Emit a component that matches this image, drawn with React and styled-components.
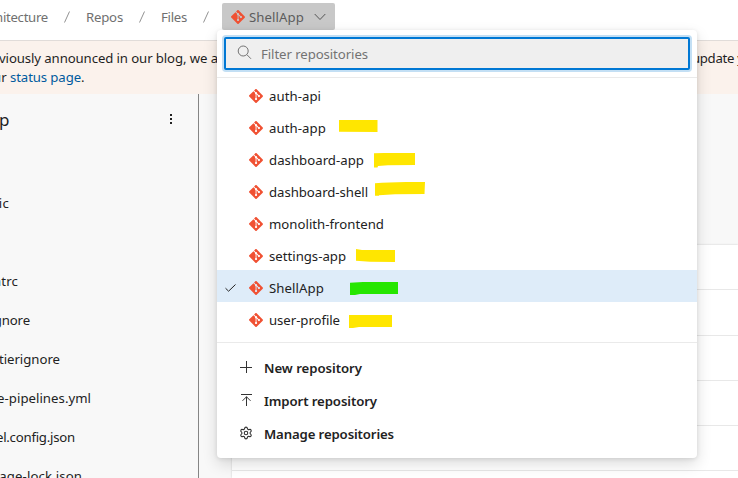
import React, { useLayoutEffect, useRef } from "react";
import styled, { createGlobalStyle } from "styled-components";
import { SiGit } from "react-icons/si";
import { Settings } from "lucide-react";

const GlobalStyle = createGlobalStyle`
  * { box-sizing: border-box; }
  body { margin: 0; background: #fff; overflow: hidden; }
`;

const Page = styled.div`
  position: relative;
  width: 738px;
  height: 478px;
  overflow: hidden;
  display: flex;
  flex-direction: column;
  background: #fff;
  color: #222;
  font-family: "Noto Sans", "Open Sans", sans-serif;
  font-size: 13.2px;
  line-height: 20px;
`;

const Measured = styled.span`
  display: block;
  flex: none;
  width: ${(p) => p.$width}px;
  white-space: pre;
`;

/* Tracks its label so that it spans exactly the given width. */
function Label({ width, children, className }) {
  const ref = useRef(null);
  useLayoutEffect(() => {
    const el = ref.current;
    el.style.letterSpacing = "0px";
    const natural = el.getBoundingClientRect().width;
    el.style.letterSpacing = `${(width - natural) / children.length}px`;
  }, [width, children]);
  return (
    <Measured $width={width} className={className}>
      <span ref={ref}>{children}</span>
    </Measured>
  );
}

const Header = styled.header`
  flex: none;
  display: flex;
  align-items: flex-start;
  height: 41px;
  border-bottom: 1px solid #e1dcd9;
  color: #707070;
`;

const Crumbs = styled.nav`
  display: flex;
  align-items: center;
  height: 33px;
  padding-top: 1px;
  margin-left: -11px;
`;

const Slash = styled.svg`
  flex: none;
  width: 6px;
  height: 12px;
  margin: 0 16px;
  stroke: #929292;
  fill: none;
`;

const RepoButton = styled.button`
  display: flex;
  align-items: center;
  width: 113px;
  height: 27px;
  margin: 3px 0 0 -3px;
  padding: 0 8px 0 9px;
  border: 0;
  border-radius: 2px;
  background: #c8c8c8;
  color: #5c5c5c;
  font: inherit;
  text-align: left;
`;

const GitIcon = styled(SiGit)`
  flex: none;
  width: 14px;
  height: 14px;
  color: #f05133;
  margin-right: ${(p) => p.$gap}px;
`;

const Chevron = styled.svg`
  flex: none;
  width: 12px;
  height: 8px;
  margin-left: 10px;
  fill: none;
  stroke: #555;
`;

const Banner = styled.div`
  flex: none;
  height: 53px;
  padding-top: 7px;
  background: #fbf2ec;
  color: #1f1f1f;
`;

const BannerLine = styled.div`
  display: flex;
  height: 19px;
  margin-left: ${(p) => p.$shift}px;
`;

const Hidden = styled.span`
  flex: none;
  width: 474px;
`;

const Link = styled.a`
  color: #005a9e;
`;

const Body = styled.div`
  flex: 1;
  display: flex;
  min-height: 0;
  background: #f8f8f8;
`;

const Sidebar = styled.aside`
  flex: none;
  width: 199px;
  border-right: 1px solid #858585;
`;

const SidebarHead = styled.div`
  display: flex;
  align-items: center;
  justify-content: space-between;
  height: 51px;
  padding-right: 25px;
`;

const RepoTitle = styled.h1`
  margin: 0 0 0 -1px;
  font-size: 17px;
  font-weight: 400;
  line-height: 24px;
`;

const Kebab = styled.svg`
  width: 4px;
  height: 12px;
  margin-top: -1px;
  fill: #222;
`;

const FileRow = styled.div`
  display: flex;
  align-items: center;
  height: 39px;
  padding-bottom: 1px;
  margin-left: ${(p) => p.$shift}px;
`;

const FileArea = styled.main`
  flex: 1;
  padding: 151px 0 0 33px;
`;

const FileTable = styled.div`
  height: 100%;
  background: #fff;
  box-shadow: 0 0 2px rgba(0, 0, 0, 0.18);
`;

const TableRow = styled.div`
  height: ${(p) => p.$height}px;
  border-bottom: 1px solid #e8e8e8;
`;

const Popup = styled.section`
  position: absolute;
  left: 217px;
  top: 30px;
  width: 480px;
  height: 428px;
  border-radius: 4px;
  background: #fff;
  box-shadow: 0 6px 15px rgba(0, 0, 0, 0.14), 0 1px 4px rgba(0, 0, 0, 0.1);
`;

const SearchArea = styled.div`
  height: 48px;
  padding: 7px;
  border-bottom: 1px solid #eaeaea;
`;

const SearchBox = styled.div`
  display: flex;
  align-items: center;
  height: 33px;
  padding-left: 11px;
  border: 2px solid #0078d4;
  border-radius: 2px;
  background: #efefef;
  box-shadow: 0 0 0 2px #c3dff4;
  color: #737373;
`;

const SearchIcon = styled.svg`
  flex: none;
  width: 15px;
  height: 15px;
  margin: -3px 9px 0 0;
  fill: none;
  stroke: #737373;
`;

const RepoList = styled.ul`
  list-style: none;
  margin: 0;
  height: 265px;
  padding: 0;
  border-bottom: 1px solid #eaeaea;
`;

const RepoItem = styled.li`
  position: relative;
  display: flex;
  align-items: center;
  height: 32px;
  padding: 4px 0 0 8px;
  background: ${(p) => (p.$selected ? "#deecf9" : "transparent")};
`;

const CheckSlot = styled.span`
  display: flex;
  flex: none;
  width: 24px;
`;

const Check = styled.svg`
  width: 11px;
  height: 8px;
  fill: none;
  stroke: #222;
`;

const Marker = styled.svg`
  position: absolute;
  left: ${(p) => p.$left}px;
  top: ${(p) => p.$top}px;
  width: 52px;
  height: 16px;
  fill: ${(p) => p.$color};
`;

const Actions = styled.div`
  padding-top: 8px;
`;

const Action = styled.div`
  display: flex;
  align-items: center;
  gap: 11px;
  height: 33px;
  padding-left: 22px;
  font-weight: 600;
`;

const ActionIcon = styled.svg`
  flex: none;
  width: 14px;
  height: 14px;
  margin-top: -2px;
  fill: none;
  stroke: #333;
`;

const GearIcon = styled(Settings)`
  flex: none;
  width: 14px;
  height: 14px;
  margin-top: -2px;
  color: #333;
`;

const YELLOW = "#ffe600";
const GREEN = "#26e600";

const REPOS = [
  { name: "auth-api", width: 52 },
  { name: "auth-app", width: 57, mark: { left: 122, top: 10, color: YELLOW, d: "M0 0H38.5V12L0 11.7Z" } },
  { name: "dashboard-app", width: 95, mark: { left: 157, top: 11, color: YELLOW, d: "M0 .3L10 0H41V12L14 12.2L4 13L3.5 14.5H0Z" } },
  { name: "dashboard-shell", width: 99, mark: { left: 158, top: 8, color: YELLOW, d: "M0 1.2Q20-.3 50 0L49.5 12L20 12.3L4 13.3V13.8H0Z" } },
  { name: "monolith-frontend", width: 115 },
  { name: "settings-app", width: 77, mark: { left: 139, top: 11, color: YELLOW, d: "M0 0L6 1L39 1V13L14 12.7L0 11.7Z" } },
  { name: "ShellApp", width: 55, selected: true, mark: { left: 133, top: 12, color: GREEN, d: "M0 .8L13 0H48V12L10 12L5 13H0Z" } },
  { name: "user-profile", width: 71, mark: { left: 132, top: 13, color: YELLOW, d: "M0 0H43V12H10L4 13H0Z" } },
];

const FILES = [
  { name: "", width: 0, shift: 0 },
  { name: "public", width: 39, shift: -30 },
  { name: "", width: 0, shift: 0 },
  { name: ".eslintrc", width: 50, shift: -32 },
  { name: ".gitignore", width: 59, shift: -29 },
  { name: ".prettierignore", width: 90, shift: -30 },
  { name: "azure-pipelines.yml", width: 121, shift: -30 },
  { name: "babel.config.json", width: 102, shift: -27 },
  { name: "package-lock.json", width: 112, shift: -30 },
];

const ROW_HEIGHTS = [45, 46, 45, 45, 45];

function Separator() {
  return (
    <Slash viewBox="0 0 6 12">
      <path d="M5.5 .5L.5 11.5" />
    </Slash>
  );
}

export default function App() {
  return (
    <Page>
      <GlobalStyle />
      <Header>
        <Crumbs>
          <Label width={59}>chitecture</Label>
          <Separator />
          <Label width={37}>Repos</Label>
          <Separator />
          <Label width={26}>Files</Label>
          <Separator />
        </Crumbs>
        <RepoButton>
          <GitIcon $gap={4} />
          <Label width={55}>ShellApp</Label>
          <Chevron viewBox="0 0 12 8">
            <path d="M.7 1L6 6.5L11.3 1" />
          </Chevron>
        </RepoButton>
      </Header>
      <Banner>
        <BannerLine $shift={-1}>
          <Label width={219}>viously announced in our blog, we a</Label>
          <Hidden />
          <Label width={42}>update</Label>
          <Label width={10}> y</Label>
        </BannerLine>
        <BannerLine $shift={-7}>
          <Label width={17}>ur </Label>
          <Link>
            <Label width={71}>status page</Label>
          </Link>
          <span>.</span>
        </BannerLine>
      </Banner>
      <Body>
        <Sidebar>
          <SidebarHead>
            <RepoTitle>p</RepoTitle>
            <Kebab viewBox="0 0 4 12">
              <path d="M1 1h2v2H1zM1 5h2v2H1zM1 9h2v2H1z" />
            </Kebab>
          </SidebarHead>
          {FILES.map((f, i) => (
            <FileRow key={i} $shift={f.shift}>
              {f.name && <Label width={f.width}>{f.name}</Label>}
            </FileRow>
          ))}
        </Sidebar>
        <FileArea>
          <FileTable>
            {ROW_HEIGHTS.map((h, i) => (
              <TableRow key={i} $height={h} />
            ))}
          </FileTable>
        </FileArea>
      </Body>
      <Popup>
        <SearchArea>
          <SearchBox>
            <SearchIcon viewBox="0 0 15 15">
              <circle cx="6.2" cy="6" r="5" />
              <path d="M9.8 9.6L14 13.8" />
            </SearchIcon>
            <Label width={107}>Filter repositories</Label>
          </SearchBox>
        </SearchArea>
        <RepoList>
          {REPOS.map((r) => (
            <RepoItem key={r.name} $selected={r.selected}>
              <CheckSlot>
                {r.selected && (
                  <Check viewBox="0 0 11 8">
                    <path d="M.5 4.2L3.6 7.2L10.5 .5" />
                  </Check>
                )}
              </CheckSlot>
              <GitIcon $gap={6} />
              <Label width={r.width}>{r.name}</Label>
              {r.mark && (
                <Marker $left={r.mark.left} $top={r.mark.top} $color={r.mark.color} viewBox="0 0 52 16">
                  <path d={r.mark.d} />
                </Marker>
              )}
            </RepoItem>
          ))}
        </RepoList>
        <Actions>
          <Action>
            <ActionIcon viewBox="0 0 14 14">
              <path d="M7.5 1v12M1 7.5h12" />
            </ActionIcon>
            <Label width={98}>New repository</Label>
          </Action>
          <Action>
            <ActionIcon viewBox="0 0 14 14">
              <path d="M2 1.5h11M7.5 13V3.5M3.5 7.8L7.5 3.8L11.5 7.8" />
            </ActionIcon>
            <Label width={113}>Import repository</Label>
          </Action>
          <Action>
            <GearIcon strokeWidth={1.9} />
            <Label width={130}>Manage repositories</Label>
          </Action>
        </Actions>
      </Popup>
    </Page>
  );
}
